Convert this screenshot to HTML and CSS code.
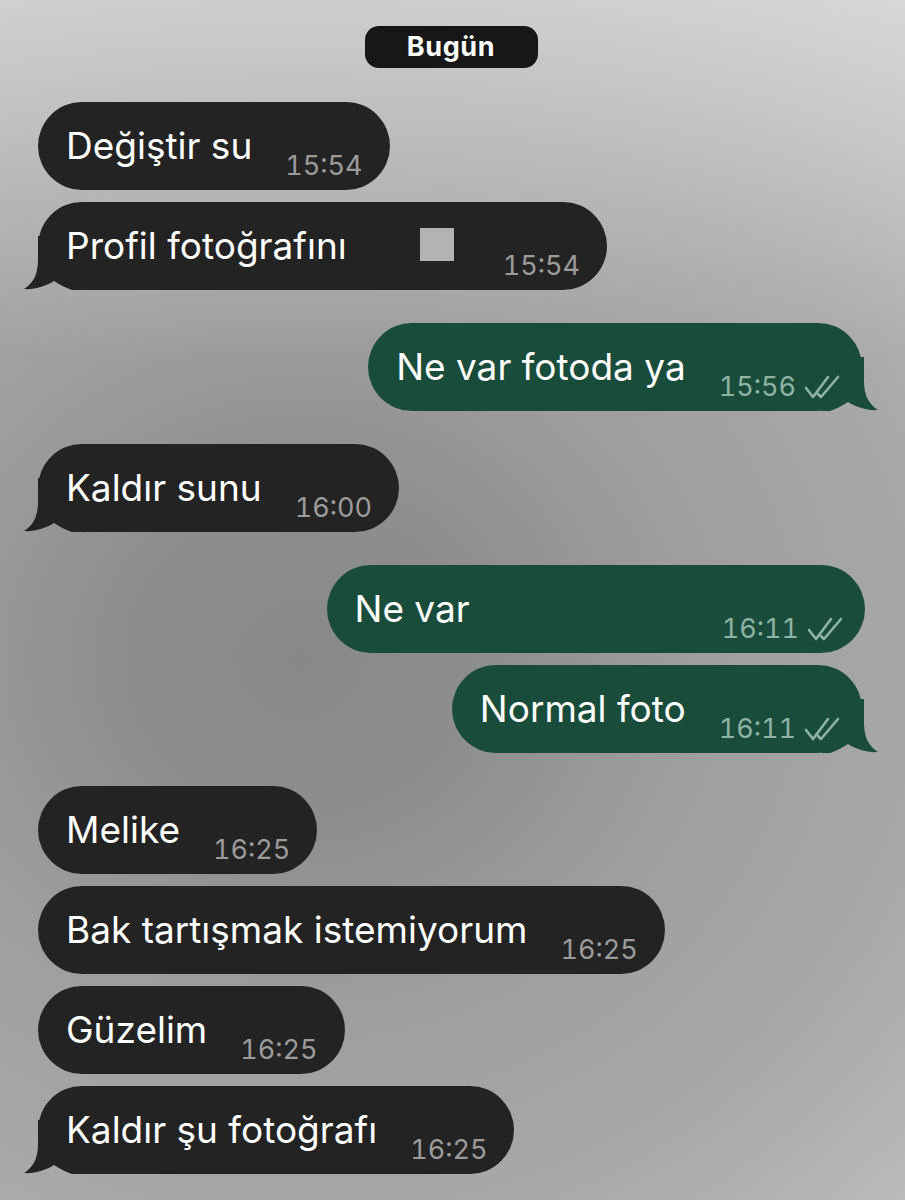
FILE: index.html
```html
<!DOCTYPE html>
<html lang="tr">
<head>
    <meta charset="UTF-8">
    <meta name="viewport" content="width=device-width, initial-scale=1.0">
    <title>Sohbet</title>
    <link rel="stylesheet" href="styles.css">
</head>
<body>
    <div class="chat">
        <div class="day"><span>Bugün</span></div>

        <div class="group incoming">
            <div class="bubble">
                <span class="text">Değiştir su</span>
                <span class="time">15:54</span>
            </div>
            <div class="bubble tail">
                <svg class="tail-shape" viewBox="0 0 60 54" width="60" height="54"><path d="M16 0 L16 24 C16 40 10 48 2 53 C12 54 24 50 32 45 C38 49 44 52 50 54 L58 54 L58 0 Z"/></svg>
                <span class="text">Profil fotoğrafını</span>
                <span class="hidden hidden-wide"><i class="blur-box"></i></span>
                <span class="time">15:54</span>
            </div>
        </div>

        <div class="group outgoing">
            <div class="bubble tail">
                <svg class="tail-shape" viewBox="0 0 60 54" width="60" height="54"><path d="M44 0 L44 24 C44 40 50 48 58 53 C48 54 36 50 28 45 C22 49 16 52 10 54 L2 54 L2 0 Z"/></svg>
                <span class="text">Ne var fotoda ya</span>
                <span class="time">15:56</span>
                <svg class="ticks" viewBox="0 0 36 24" width="36" height="24"><path d="M2 13 L9 22 L24 2"/><path d="M14 19 L17 22 L34 2"/></svg>
            </div>
        </div>

        <div class="group incoming">
            <div class="bubble tail">
                <svg class="tail-shape" viewBox="0 0 60 54" width="60" height="54"><path d="M16 0 L16 24 C16 40 10 48 2 53 C12 54 24 50 32 45 C38 49 44 52 50 54 L58 54 L58 0 Z"/></svg>
                <span class="text">Kaldır sunu</span>
                <span class="time">16:00</span>
            </div>
        </div>

        <div class="group outgoing">
            <div class="bubble wide-right">
                <span class="text">Ne var</span>
                <span class="hidden hidden-long"></span>
                <span class="time">16:11</span>
                <svg class="ticks" viewBox="0 0 36 24" width="36" height="24"><path d="M2 13 L9 22 L24 2"/><path d="M14 19 L17 22 L34 2"/></svg>
            </div>
            <div class="bubble tail">
                <svg class="tail-shape" viewBox="0 0 60 54" width="60" height="54"><path d="M44 0 L44 24 C44 40 50 48 58 53 C48 54 36 50 28 45 C22 49 16 52 10 54 L2 54 L2 0 Z"/></svg>
                <span class="text">Normal foto</span>
                <span class="time">16:11</span>
                <svg class="ticks" viewBox="0 0 36 24" width="36" height="24"><path d="M2 13 L9 22 L24 2"/><path d="M14 19 L17 22 L34 2"/></svg>
            </div>
        </div>

        <div class="group incoming">
            <div class="bubble">
                <span class="text">Melike</span>
                <span class="time">16:25</span>
            </div>
            <div class="bubble">
                <span class="text">Bak tartışmak istemiyorum</span>
                <span class="time">16:25</span>
            </div>
            <div class="bubble">
                <span class="text">Güzelim</span>
                <span class="time">16:25</span>
            </div>
            <div class="bubble tail">
                <svg class="tail-shape" viewBox="0 0 60 54" width="60" height="54"><path d="M16 0 L16 24 C16 40 10 48 2 53 C12 54 24 50 32 45 C38 49 44 52 50 54 L58 54 L58 0 Z"/></svg>
                <span class="text">Kaldır şu fotoğrafı</span>
                <span class="time">16:25</span>
            </div>
        </div>
    </div>
</body>
</html>
```

FILE: styles.css
```css
html, body {
    margin: 0;
    padding: 0;
}
body {
    width: 905px;
    height: 1200px;
    overflow: hidden;
    font-family: Inter, "Liberation Sans", sans-serif;
    background:
        linear-gradient(to bottom, rgba(230, 230, 230, 0.55) 0%, rgba(230, 230, 230, 0) 30%),
        radial-gradient(ellipse 760px 680px at 300px 660px, #888888 0%, #8e8e8e 25%, #9d9d9d 50%, #a9a9a9 85%, #b2b2b2 100%, #c8c8c8 130%);
}
.chat {
    display: flex;
    flex-direction: column;
    gap: 33px;
    padding: 26px 43px 0 38px;
}
.day {
    display: flex;
    justify-content: center;
    margin-bottom: 1px;
    padding-left: 2px;
}
.day span {
    width: 173px;
    height: 42px;
    border-radius: 14px;
    background: #171717;
    color: #fff;
    font-weight: 700;
    font-size: 27px;
    letter-spacing: 0.6px;
    line-height: 42px;
    text-align: center;
}
.group {
    display: flex;
    flex-direction: column;
    gap: 12px;
}
.incoming {
    align-items: flex-start;
}
.outgoing {
    align-items: flex-end;
}
.bubble {
    position: relative;
    display: flex;
    align-items: flex-end;
    height: 88px;
    box-sizing: border-box;
    padding: 0 27px 0 28px;
    border-radius: 44px;
    background: #232323;
    color: #fff;
}
.outgoing .bubble {
    background: #1a4c3b;
    padding-right: 22px;
}
.bubble.wide-right {
    margin-right: -3px;
}
.text, .time, .ticks, .hidden {
    position: relative;
}
.text {
    font-size: 37px;
    line-height: 44px;
    margin-bottom: 22px;
    white-space: nowrap;
}
.time {
    margin-left: 33px;
    font-size: 27px;
    font-variant-numeric: tabular-nums;
    line-height: 30px;
    margin-bottom: 9px;
    color: #9b9b9b;
}
.outgoing .time {
    color: #8eb2a4;
}
.ticks {
    margin: 0 0 12px 8px;
    fill: none;
    stroke: #8eb2a4;
    stroke-width: 2.6;
    stroke-linecap: round;
    stroke-linejoin: round;
}
.tail-shape {
    position: absolute;
    bottom: 0;
    fill: #232323;
}
.incoming .tail-shape {
    left: -16px;
}
.outgoing .tail-shape {
    right: -18px;
    fill: #1a4c3b;
}
.hidden {
    align-self: stretch;
    display: flex;
    align-items: center;
}
.hidden-wide {
    width: 123px;
    justify-content: flex-end;
    padding-right: 16px;
    box-sizing: border-box;
}
.blur-box {
    width: 34px;
    height: 33px;
    margin-top: -4px;
    background: #b3b3b3;
}
.hidden-long {
    width: 219px;
}
```
